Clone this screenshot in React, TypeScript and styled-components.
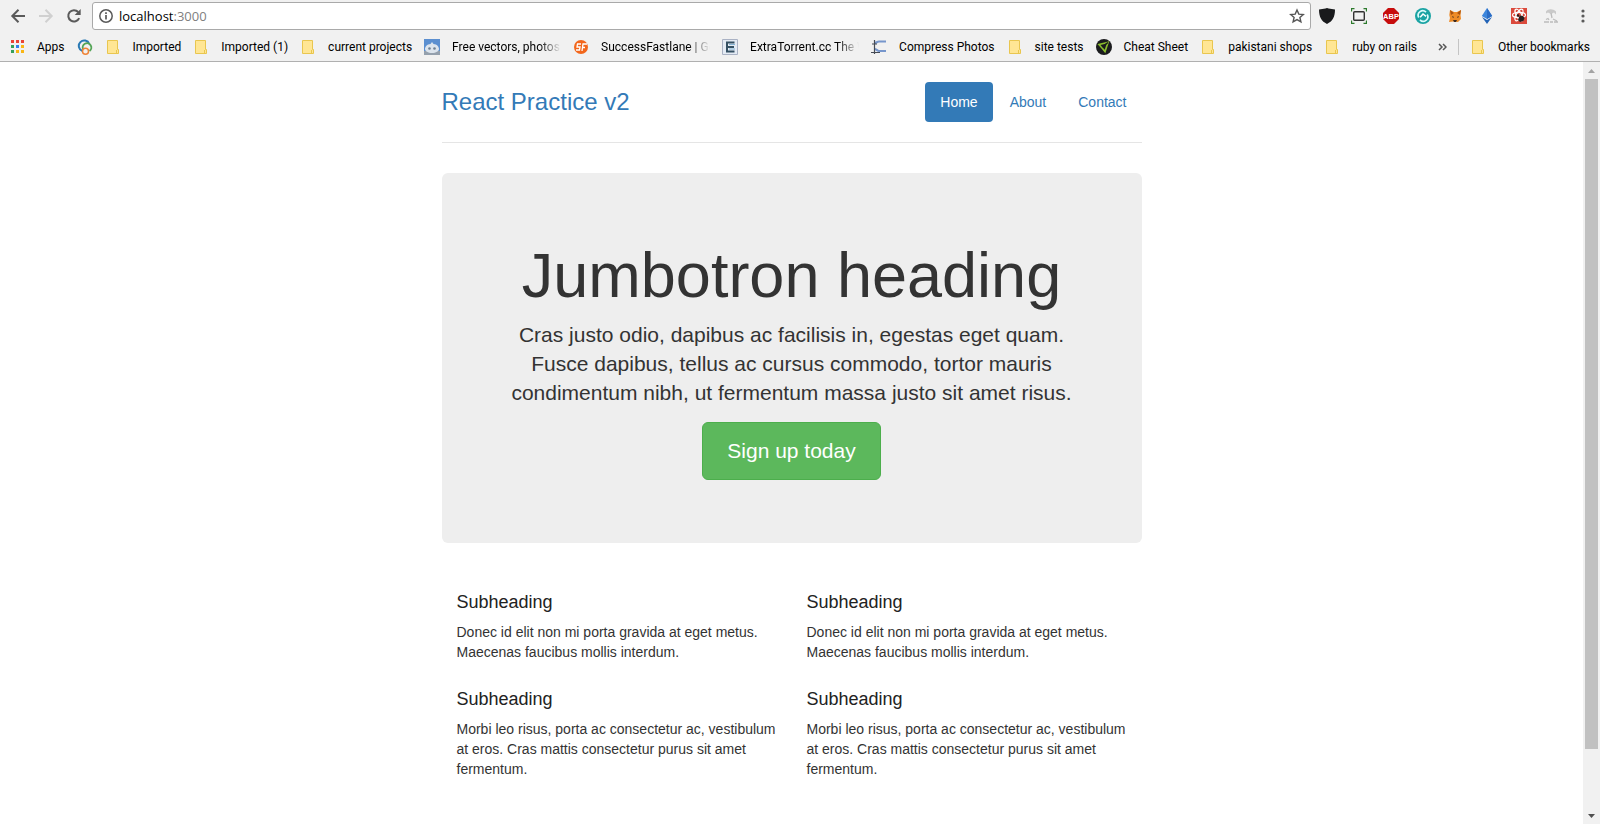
import React from "react";
import styled, { createGlobalStyle } from "styled-components";

const Global = createGlobalStyle`
  * { box-sizing: border-box; }
  html, body, #root { height: 100%; }
  body { margin: 0; background: #fff; color: #333; font: 14px/20px "Liberation Sans", Arial, sans-serif; overflow: hidden; }
  a { color: #337ab7; text-decoration: none; }
`;

const Browser = styled.div`
  display: flex;
  flex-direction: column;
  height: 100%;
`;
const Chrome = styled.div`
  flex: none;
  background: #f1f1f1;
  border-bottom: 1px solid #b0b0b0;
  font: 12px/16px "Open Sans", "Noto Sans", sans-serif;
  color: #000;
`;
const Toolbar = styled.div`
  display: flex;
  align-items: center;
  height: 32px;
  padding: 2px 9px 2px 10px;
`;
const IconButton = styled.button<{ $gap?: number }>`
  display: flex;
  flex: none;
  padding: 0;
  border: 0;
  background: none;
  margin-right: ${(p) => p.$gap ?? 0}px;
`;
const Address = styled.div`
  display: flex;
  align-items: center;
  flex: 1;
  height: 28px;
  padding: 0 5px;
  border: 1px solid #a9a9a9;
  border-radius: 3px;
  background: #fff;
  margin-right: 8px;
`;
const Url = styled.div`
  flex: 1;
  margin-left: 5px;
  font-size: 13px;
  span { color: #808080; }
`;
const Extensions = styled.div`
  display: flex;
  align-items: center;
  gap: 16px;
`;
const Bookmarks = styled.nav`
  display: flex;
  align-items: center;
  height: 29px;
  padding: 0 10px 0 9px;
  gap: 12px;
  font-family: Roboto, "Open Sans", sans-serif;
`;
const Bookmark = styled.a`
  display: flex;
  flex: none;
  align-items: center;
  gap: 12px;
  color: #000;
`;
const Label = styled.span<{ $fade?: boolean }>`
  white-space: nowrap;
  ${(p) => p.$fade && `width: 109px; mask-image: linear-gradient(to right, #000 80%, transparent);`}
`;
const Overflow = styled.div`
  display: flex;
  align-items: center;
  margin-left: auto;
  gap: 11px;
`;
const Divider = styled.span`
  width: 1px;
  height: 16px;
  background: #c4c4c4;
`;

const Viewport = styled.div`
  display: flex;
  flex: 1;
  min-height: 0;
`;
const Page = styled.main`
  flex: 1;
  overflow: hidden;
`;
const Container = styled.div`
  max-width: 700px;
  margin: 0 auto;
  padding-top: 20px;
`;
const Header = styled.header`
  display: flex;
  justify-content: space-between;
  padding-bottom: 20px;
  margin-bottom: 30px;
  border-bottom: 1px solid #e5e5e5;
`;
const Brand = styled.h3`
  margin: 0;
  font-size: 24px;
  line-height: 40px;
  font-weight: 400;
`;
const Pills = styled.nav`
  display: flex;
  gap: 2px;
`;
const Pill = styled.a<{ $active?: boolean }>`
  padding: 10px 15px;
  border-radius: 4px;
  ${(p) => p.$active && `background: #337ab7; color: #fff;`}
`;
const Jumbotron = styled.section`
  display: flex;
  flex-direction: column;
  align-items: center;
  padding: 68px 60px 63px;
  border-radius: 6px;
  background: #eee;
  text-align: center;
`;
const Title = styled.h1`
  margin: 0 0 10px;
  font-size: 63px;
  line-height: 69px;
  font-weight: 400;
`;
const Lead = styled.p`
  margin: 0 0 15px;
  font-size: 21px;
  line-height: 29px;
`;
const SignUp = styled.button`
  padding: 14px 24px;
  border: 1px solid #4cae4c;
  border-radius: 6px;
  background: #5cb85c;
  color: #fff;
  font: 21px/28px "Liberation Sans", Arial, sans-serif;
`;
const Marketing = styled.section`
  display: grid;
  grid-template-columns: 1fr 1fr;
  row-gap: 27px;
  margin: 49px 0 40px;
`;
const Column = styled.div`
  padding: 0 15px;
`;
const Subheading = styled.h4`
  margin: 0 0 10px;
  font-size: 18px;
  line-height: 20px;
  font-weight: 400;
  color: #222;
`;
const Text = styled.p`
  margin: 0;
`;

const Scrollbar = styled.div`
  display: flex;
  flex-direction: column;
  align-items: center;
  flex: none;
  width: 17px;
  background: #f1f1f1;
`;
const Arrow = styled.div`
  display: flex;
  flex: none;
  align-items: center;
  height: 17px;
`;
const Track = styled.div`
  flex: 1;
  width: 13px;
`;
const Thumb = styled.div`
  height: 92%;
  background: #c1c1c1;
`;

const Icon16 = styled.svg.attrs({ viewBox: "0 0 16 16", width: 16, height: 16, fill: "none", "aria-hidden": true })`
  flex: none;
`;

const Back = () => <Icon16><path d="M15 8H2.500M8.500 1.800L2.300 8l6.200 6.200" stroke="#5a5a5a" strokeWidth="2" /></Icon16>;
const Forward = () => <Icon16><path d="M1 8h12.500M7.500 1.800L13.700 8l-6.200 6.200" stroke="#d0d0d0" strokeWidth="2" /></Icon16>;
const Reload = () => (
  <Icon16><path d="M13.200 10.200A5.700 5.700 0 1 1 12.200 4" stroke="#5a5a5a" strokeWidth="2" /><path d="M14.700 1v6H8.700z" fill="#5a5a5a" /></Icon16>
);
const Info = () => (
  <Icon16><circle cx="8" cy="8" r="6.200" stroke="#5a5a5a" strokeWidth="1.500" /><path d="M8 7v4.500M8 4.300V6" stroke="#5a5a5a" strokeWidth="1.700" /></Icon16>
);
const Star = () => <Icon16><path d="M8 2l1.800 4.100 4.500.4-3.400 3 1 4.400L8 11.600l-3.900 2.300 1-4.400-3.400-3 4.500-.4z" stroke="#555" strokeWidth="1.400" /></Icon16>;
const Shield = () => <Icon16><path d="M8 0l1.500.6 6.500 1C16 9 13.500 13.500 8 16 2.500 13.500 0 9 0 1.600l6.500-1z" fill="#191a1c" /></Icon16>;
const Capture = () => (
  <Icon16><rect x="2.700" y="3.700" width="10.600" height="8.600" rx="1" stroke="#333" strokeWidth="1.400" /><path d="M.5 3.500v-3h3M12.500.5h3v3M15.500 12.500v3h-3M3.500 15.500h-3v-3" stroke="#2c7a2c" strokeWidth="1.300" /></Icon16>
);
const AdBlock = () => (
  <Icon16><path d="M5 0h6l5 5v6l-5 5H5l-5-5V5z" fill="#c70d0d" /><text x="8" y="10.800" textAnchor="middle" fontSize="7.500" fontWeight="bold" fill="#fff" fontFamily="Liberation Sans">ABP</text></Icon16>
);
const Teal = () => (
  <Icon16>
    <circle cx="8" cy="8" r="8" fill="#1aa3a3" />
    <path d="M3.800 9.500A4.500 4.500 0 0 1 11 4.200M12.200 6.500A4.500 4.500 0 0 1 5 11.800" stroke="#d9fafa" strokeWidth="1.700" />
    <path d="M5.200 9.200L8 6l3 2.300" stroke="#fff" strokeWidth="1.500" />
  </Icon16>
);
const Fox = () => (
  <Icon16><path d="M3 2l4 2h3l4-2-.5 5 .5 4-3 3-5-.5L2 14l1-4-.7-3z" fill="#ee8b26" /><path d="M3 2l4 3-3 2zM14 2l-4 3 3 2z" fill="#a9510d" /><path d="M5 8l2 1-1 1zM12 8l-2 1 1 1zM6 12h4l-1 2H7z" fill="#3d2b20" /></Icon16>
);
const Ether = () => (
  <Icon16><path d="M8 0l5.200 8L8 11 2.800 8z" fill="#3c86dc" /><path d="M8 0l5.200 8L8 11z" fill="#2a6cc4" /><path d="M3 9l5 3 5-3-5 7z" fill="#2263b6" /></Icon16>
);
const ReactTool = () => (
  <Icon16><path d="M0 0h16v16H0z" fill="#db4a3c" /><g stroke="#fff" strokeWidth="1.200"><ellipse cx="8" cy="7" rx="6.500" ry="2.600" /><ellipse cx="8" cy="7" rx="6.500" ry="2.600" transform="rotate(60 8 7)" /><ellipse cx="8" cy="7" rx="6.500" ry="2.600" transform="rotate(120 8 7)" /></g><path d="M8 9l1.500-1.500L12 8l1.500 2-1 3-3.500 1-2-2z" fill="#262020" /><circle cx="7" cy="7.500" r="1.300" fill="#262020" /></Icon16>
);
const Palm = () => (
  <Icon16><path d="M3 3.500c2-3 7-3 10 0v3l-2-2-3 1.500-3-1.500-2 1z" fill="#c9c9c9" /><path d="M8 5l1 5M1 14h5M7 14h3M11 14h4M3 11.500l2-1 1 1.500M10 11l4 2" stroke="#bcbcbc" strokeWidth="1.300" /></Icon16>
);
const Menu = () => <Icon16><circle cx="8" cy="3" r="1.600" fill="#5a5a5a" /><circle cx="8" cy="8" r="1.600" fill="#5a5a5a" /><circle cx="8" cy="13" r="1.600" fill="#5a5a5a" /></Icon16>;

const appColors = ["#ea4335", "#ea4335", "#ea4335", "#34a05a", "#2f80ed", "#f9b614", "#34a05a", "#f9b614", "#f9b614"];
const Apps = () => (
  <Icon16>
    {appColors.map((c, i) => (
      <rect key={i} x={2 + (i % 3) * 5} y={1 + Math.floor(i / 3) * 5} width="3" height="3" fill={c} />
    ))}
  </Icon16>
);
const Rings = () => (
  <Icon16>
    <path d="M5.500 12A5.400 5.400 0 1 1 12.300 5" stroke="#2a7ab5" strokeWidth="2" />
    <path d="M6.200 10.500A4.300 4.300 0 1 1 12.500 12" stroke="#54a557" strokeWidth="1.900" />
    <circle cx="8.500" cy="12.200" r="3" stroke="#ef8336" strokeWidth="1.500" />
  </Icon16>
);
const Folder = () => (
  <Icon16><path d="M2.500 1.500h10v9h1v4h-11z" fill="#ffe694" stroke="#e9c64f" /><path d="M11.500 14.500v-3.500" stroke="#e9c64f" /></Icon16>
);
const Robot = () => (
  <Icon16><path d="M0 0h16v16H0z" fill="#5b8fd0" /><path d="M0 12h16v4H0z" fill="#94a0ad" /><path d="M8 3l1.500 2C13 5 15 8 15 10s-3 4-7 4-7-2-7-4 2-5 5.500-5z" fill="#dce4ed" /><circle cx="5.500" cy="9.500" r="1.300" fill="#6d8092" /><circle cx="10.500" cy="9.500" r="1.300" fill="#6d8092" /></Icon16>
);
const Fastlane = () => (
  <Icon16><circle cx="8" cy="8" r="7" fill="#f2661b" /><path d="M8 5H4.500L4 8h3l-.5 3H3M9 12l1-7h4M9.500 8.500H12" stroke="#fff" strokeWidth="1.300" /></Icon16>
);
const Torrent = () => (
  <Icon16><path d="M.5.5h15v15H.5z" fill="#e4ebf4" stroke="#aab2c4" /><path d="M12.500 3.500H5v9h7.500M6 8h6" stroke="#345063" strokeWidth="2" /><path d="M13 5.500H7M13 10H7" stroke="#85b5d6" /></Icon16>
);
const Compress = () => (
  <Icon16><path d="M15 2.500H8C6 2.500 5.500 4 3 4M3 10c3 0 3 2 5 2h7" stroke="#7696cc" strokeWidth="2.200" /><path d="M3.500 1v14M1 5h5M0 13.500h9" stroke="#454b55" strokeWidth="1.200" /></Icon16>
);
const Cheat = () => (
  <Icon16><circle cx="8" cy="8" r="8" fill="#1b1c1e" /><path d="M3 5.500l9-2-3 9-2.500-3z" stroke="#8bbf2d" strokeWidth="1.700" /><path d="M6 8l6-4.500" stroke="#1b1c1e" strokeWidth="1.500" /></Icon16>
);

const bookmarks: { icon: React.FC; label: string; fade?: boolean }[] = [
  { icon: Folder, label: "Imported" },
  { icon: Folder, label: "Imported (1)" },
  { icon: Folder, label: "current projects" },
  { icon: Robot, label: "Free vectors, photos", fade: true },
  { icon: Fastlane, label: "SuccessFastlane | Ge", fade: true },
  { icon: Torrent, label: "ExtraTorrent.cc The W", fade: true },
  { icon: Compress, label: "Compress Photos" },
  { icon: Folder, label: "site tests" },
  { icon: Cheat, label: "Cheat Sheet" },
  { icon: Folder, label: "pakistani shops" },
  { icon: Folder, label: "ruby on rails" },
];
const extensions = [
  { name: "Shield", icon: Shield },
  { name: "Screen capture", icon: Capture },
  { name: "Ad blocker", icon: AdBlock },
  { name: "Sync", icon: Teal },
  { name: "Wallet", icon: Fox },
  { name: "Ethereum", icon: Ether },
  { name: "React tools", icon: ReactTool },
  { name: "Palm", icon: Palm },
  { name: "Menu", icon: Menu },
];
const donec = "Donec id elit non mi porta gravida at eget metus. Maecenas faucibus mollis interdum.";
const morbi = "Morbi leo risus, porta ac consectetur ac, vestibulum at eros. Cras mattis consectetur purus sit amet fermentum.";

export default function App() {
  return (
    <Browser>
      <Global />
      <Chrome>
        <Toolbar>
          <IconButton $gap={12} aria-label="Back"><Back /></IconButton>
          <IconButton $gap={12} aria-label="Forward"><Forward /></IconButton>
          <IconButton $gap={10} aria-label="Reload"><Reload /></IconButton>
          <Address>
            <Info />
            <Url>localhost<span>:3000</span></Url>
            <IconButton aria-label="Bookmark this page"><Star /></IconButton>
          </Address>
          <Extensions>
            {extensions.map(({ name, icon: Icon }) => (
              <IconButton key={name} aria-label={name}><Icon /></IconButton>
            ))}
          </Extensions>
        </Toolbar>
        <Bookmarks>
          <Bookmark href="#"><Apps /><Label>Apps</Label></Bookmark>
          <Bookmark href="#" aria-label="Rings"><Rings /></Bookmark>
          {bookmarks.map(({ icon: Icon, label, fade }) => (
            <Bookmark href="#" key={label}><Icon /><Label $fade={fade}>{label}</Label></Bookmark>
          ))}
          <Overflow>
            <IconButton aria-label="More bookmarks">
              <svg width="9" height="8" viewBox="0 0 9 8" fill="none"><path d="M1 1l3 3-3 3M5 1l3 3-3 3" stroke="#555" strokeWidth="1.500" /></svg>
            </IconButton>
            <Divider />
            <Bookmark href="#"><Folder /><Label>Other bookmarks</Label></Bookmark>
          </Overflow>
        </Bookmarks>
      </Chrome>
      <Viewport>
        <Page>
          <Container>
            <Header>
              <Brand><a href="#">React Practice v2</a></Brand>
              <Pills>
                <Pill href="#" $active>Home</Pill>
                <Pill href="#">About</Pill>
                <Pill href="#">Contact</Pill>
              </Pills>
            </Header>
            <Jumbotron>
              <Title>Jumbotron heading</Title>
              <Lead>Cras justo odio, dapibus ac facilisis in, egestas eget quam. Fusce dapibus, tellus ac cursus commodo, tortor mauris condimentum nibh, ut fermentum massa justo sit amet risus.</Lead>
              <SignUp>Sign up today</SignUp>
            </Jumbotron>
            <Marketing>
              {[donec, donec, morbi, morbi].map((text, i) => (
                <Column key={i}>
                  <Subheading>Subheading</Subheading>
                  <Text>{text}</Text>
                </Column>
              ))}
            </Marketing>
          </Container>
        </Page>
        <Scrollbar>
          <Arrow><svg width="7" height="4"><path d="M0 4l3.500-4L7 4z" fill="#a3a3a3" /></svg></Arrow>
          <Track><Thumb /></Track>
          <Arrow><svg width="7" height="4"><path d="M0 0h7L3.500 4z" fill="#505050" /></svg></Arrow>
        </Scrollbar>
      </Viewport>
    </Browser>
  );
}
